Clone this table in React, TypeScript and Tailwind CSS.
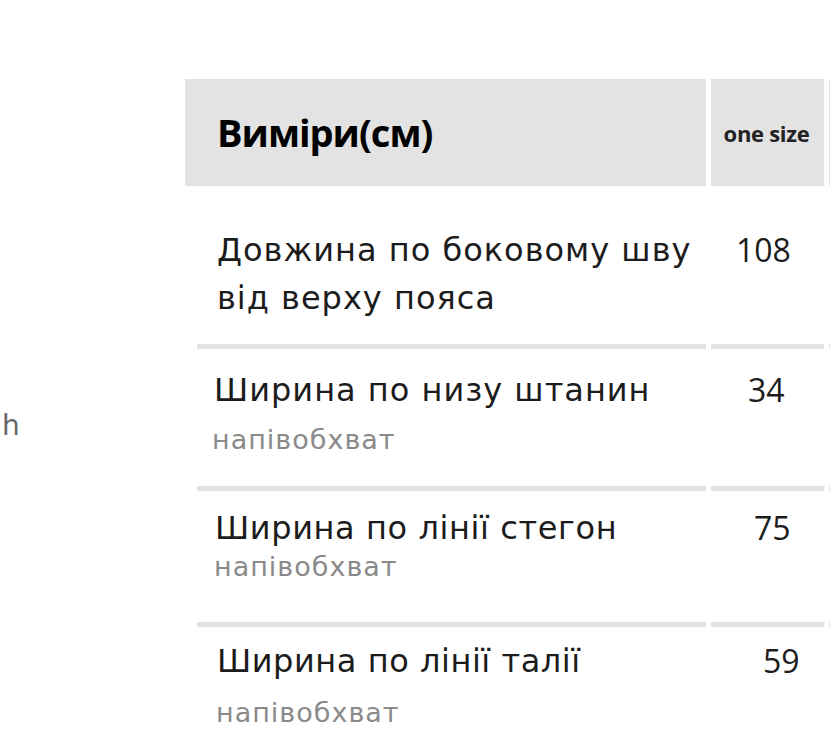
const rows = [
  {
    title: ["Довжина по боковому шву", "від верху пояса"],
    note: "",
    value: "108",
    pt: "pt-[40px]",
    notePos: "",
    valuePad: "pl-[25px]",
    track: "tracking-[1px]",
  },
  {
    title: ["Ширина по низу штанин"],
    note: "напівобхват",
    value: "34",
    pt: "pt-[17px]",
    notePos: "mt-[8px] leading-[36px] -ml-[2px]",
    valuePad: "pl-[37px]",
    track: "tracking-[1px]",
  },
  {
    title: ["Ширина по лінії стегон"],
    note: "напівобхват",
    value: "75",
    pt: "pt-[13px]",
    notePos: "mt-0 leading-[30px] -ml-[1px]",
    valuePad: "pl-[43px]",
    track: "tracking-[0.6px]",
  },
  {
    title: ["Ширина по лінії талії"],
    note: "напівобхват",
    value: "59",
    pt: "pt-[10px]",
    notePos: "mt-[10px] leading-[36px] -ml-[1px]",
    valuePad: "pl-[52px]",
    track: "tracking-[0.55px]",
  },
];

const heights = ["h-[158px]", "h-[137px]", "h-[131px]", "h-[128px]"];
const titlePad = ["pl-[32px]", "pl-[29px]", "pl-[30px]", "pl-[32px]"];

export default function App() {
  return (
    <div className="flex w-[830px] h-[755px] overflow-hidden bg-white font-['Open_Sans',sans-serif]">
      <div className="w-[185px] shrink-0 pt-[408px] pl-[2px] text-[28px] leading-[36px] text-[#666] font-['DejaVu_Sans',sans-serif]">
        h
      </div>
      <div className="pt-[79px] shrink-0">
        <div className="grid grid-cols-[521px_113px_40px] gap-x-[5px]">
          <div className="h-[107px] bg-[#e3e3e3] flex items-center pl-[32px]">
            <span className="text-[38px] font-bold text-black tracking-[-1px]">
              Виміри(см)
            </span>
          </div>
          <div className="h-[107px] bg-[#e3e3e3] flex items-center justify-center">
            <span className="text-[22px] font-bold text-[#222] tracking-[-0.3px] pt-[2px] pr-[2px]">
              one size
            </span>
          </div>
          <div className="h-[107px] bg-[#e3e3e3]" />

          {rows.map((r, i) => (
            <div key={i} className="contents">
              <div className={`${heights[i]} ${r.pt} ${titlePad[i]} text-[#1c1c1c] font-['DejaVu_Sans',sans-serif]`}>
                {r.title.map((t) => (
                  <div key={t} className={`text-[32px] leading-[48px] ${r.track} whitespace-nowrap`}>
                    {t}
                  </div>
                ))}
                {r.note && (
                  <div className={`${r.notePos} text-[27px] tracking-[1px] text-[#8a8a8a]`}>
                    {r.note}
                  </div>
                )}
              </div>
              <div className={`${heights[i]} ${r.pt} ${r.valuePad} text-[32px] leading-[48px] text-[#1c1c1c]`}>
                {r.value}
              </div>
              <div className={heights[i]} />
              {i < rows.length - 1 && (
                <>
                  <div className="h-[5px] ml-[12px] bg-[#e2e2e2]" />
                  <div className="h-[5px] bg-[#e2e2e2]" />
                  <div className="h-[5px] bg-[#e2e2e2]" />
                </>
              )}
            </div>
          ))}
        </div>
      </div>
    </div>
  );
}
